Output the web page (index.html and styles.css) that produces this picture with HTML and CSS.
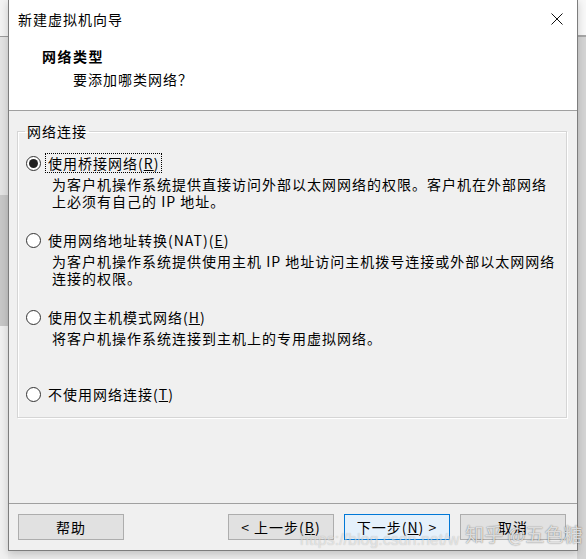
FILE: index.html
```html
<!DOCTYPE html>
<html lang="zh-CN">
<head>
<meta charset="utf-8">
<title>新建虚拟机向导</title>
<link rel="stylesheet" href="styles.css">
</head>
<body>
<div class="desktop">
  <div class="dialog">
    <div class="titlebar">
      <span class="title">新建虚拟机向导</span>
      <span class="close">
        <svg width="12" height="12" viewBox="0 0 12 12"><path d="M0.5 0.5 L11.5 11.5 M11.5 0.5 L0.5 11.5" stroke="#111" stroke-width="1" fill="none"/></svg>
      </span>
    </div>
    <div class="header">
      <div class="h-title">网络类型</div>
      <div class="h-sub">要添加哪类网络？</div>
    </div>
    <div class="body">
      <fieldset class="group">
        <legend class="legend">网络连接</legend>
        <div class="opt">
          <div class="opt-row"><span class="radio checked"></span><span class="label focus">使用桥接网络(<u>R</u>)</span></div>
          <div class="desc">为客户机操作系统提供直接访问外部以太网网络的权限。客户机在外部网络<br>上必须有自己的 IP 地址。</div>
        </div>
        <div class="opt">
          <div class="opt-row"><span class="radio"></span><span class="label">使用网络地址转换(NAT)(<u>E</u>)</span></div>
          <div class="desc">为客户机操作系统提供使用主机 IP 地址访问主机拨号连接或外部以太网网络<br>连接的权限。</div>
        </div>
        <div class="opt">
          <div class="opt-row"><span class="radio"></span><span class="label">使用仅主机模式网络(<u>H</u>)</span></div>
          <div class="desc two">将客户机操作系统连接到主机上的专用虚拟网络。</div>
        </div>
        <div class="opt">
          <div class="opt-row"><span class="radio"></span><span class="label">不使用网络连接(<u>T</u>)</span></div>
        </div>
      </fieldset>
    </div>
    <div class="footer">
      <button class="btn">帮助</button>
      <div class="btn-group">
        <button class="btn">&lt; 上一步(<u>B</u>)</button>
        <button class="btn default">下一步(<u>N</u>) &gt;</button>
        <button class="btn">取消</button>
      </div>
    </div>
  </div>
  <div class="watermark">
    <span class="wm-url">https://blog.csdn.net/w</span>
    <span class="wm-brand">知乎 @五色糖</span>
  </div>
</div>
</body>
</html>
```

FILE: styles.css
```css
* { box-sizing: border-box; }

html, body {
  margin: 0;
  padding: 0;
}

body {
  width: 586px;
  height: 559px;
  overflow: hidden;
  font-family: "Noto Sans CJK SC", "Noto Sans", sans-serif;
  font-size: 14px;
  letter-spacing: 1px;
  color: #000;
}

.desktop {
  position: relative;
  width: 586px;
  height: 559px;
  background:
    linear-gradient(to bottom, #f3f3f3 0 36px, #9c9c9c 36px 37px, #e3e3e3 37px 195px, #c7c7c7 195px 326px, #f0f0f0 326px) left top / 8px 100% no-repeat,
    linear-gradient(to bottom, #f8f8f8 0 35px, #a6a6a6 35px 37px, #d4d4d4 37px) right top / 9px 100% no-repeat,
    #ececec;
}

.dialog {
  position: absolute;
  left: 8px;
  top: -1px;
  width: 570px;
  height: 552px;
  border: 1px solid #7d7d7d;
  background: #f0f0f0;
  display: flex;
  flex-direction: column;
  box-shadow: 0 3px 8px rgba(0, 0, 0, 0.18);
}

.titlebar {
  height: 38px;
  flex: none;
  background: #fff;
  display: flex;
  align-items: center;
  justify-content: space-between;
  padding-left: 9px;
}

.title {
  line-height: 20px;
}

.close {
  width: 40px;
  height: 38px;
  display: flex;
  align-items: center;
  justify-content: center;
}

.close svg { display: block; }

.header {
  height: 73px;
  flex: none;
  background: #fff;
  border-bottom: 1px solid #a0a0a0;
  padding: 8px 0 0 33px;
}

.h-title {
  font-weight: 700;
  line-height: 20px;
  letter-spacing: 1.5px;
}

.h-sub {
  margin-top: 3px;
  padding-left: 31px;
  line-height: 20px;
}

.body {
  flex: 1;
  padding: 11px 10px 0 8px;
}

.group {
  margin: 0;
  padding: 13px 10px 13px 10px;
  border: 1px solid #d5d5d5;
  box-shadow: 1px 1px 0 #fff, inset 1px 1px 0 #fff;
  min-width: 0;
}

.legend {
  margin-left: -3px;
  padding: 0 2px;
  line-height: 18px;
}

.opt + .opt {
  margin-top: 20px;
}

.opt-row {
  display: flex;
  align-items: center;
  height: 20px;
}

.radio {
  width: 15px;
  height: 15px;
  flex: none;
  margin-left: -2px;
  border: 1px solid #333;
  border-radius: 50%;
  background: #fff;
  display: flex;
  align-items: center;
  justify-content: center;
}

.radio.checked::after {
  content: "";
  width: 9px;
  height: 9px;
  border-radius: 50%;
  background: #222;
}

.label {
  margin-left: 4px;
  padding: 0 2px;
  line-height: 18px;
  border: 1px dotted transparent;
  white-space: nowrap;
}

.label.focus {
  border-color: #000;
}

.desc {
  margin-top: 3px;
  padding-left: 24px;
  line-height: 17px;
  white-space: nowrap;
}

.desc.two {
  min-height: 34px;
}

.footer {
  flex: none;
  border-top: 1px solid #a0a0a0;
  padding: 10px 11px 10px 9px;
  display: flex;
  justify-content: space-between;
}

.btn-group {
  display: flex;
  gap: 10px;
}

.btn {
  width: 106px;
  height: 26px;
  margin: 0;
  padding: 0;
  border: 1px solid #adadad;
  background: #e1e1e1;
  font-family: inherit;
  font-size: 14px;
  letter-spacing: 1px;
  color: #000;
  line-height: 22px;
}

.btn.default {
  border-color: #0078d7;
  background: #e5f1fb;
}

.watermark {
  position: absolute;
  left: 300px;
  top: 522px;
  display: flex;
  align-items: flex-end;
  gap: 6px;
  pointer-events: none;
  letter-spacing: 0;
}

.wm-url {
  font-family: "Liberation Sans", sans-serif;
  font-size: 16px;
  color: rgba(255, 255, 255, 0.55);
  text-shadow: 0 0 1px rgba(0, 0, 0, 0.25);
  line-height: 20px;
  margin-bottom: -4px;
}

.wm-brand {
  font-size: 19px;
  color: rgba(255, 255, 255, 0.75);
  text-shadow: 0 0 1px rgba(0, 0, 0, 0.45), 0 0 2px rgba(0, 0, 0, 0.2);
  line-height: 24px;
}
```
